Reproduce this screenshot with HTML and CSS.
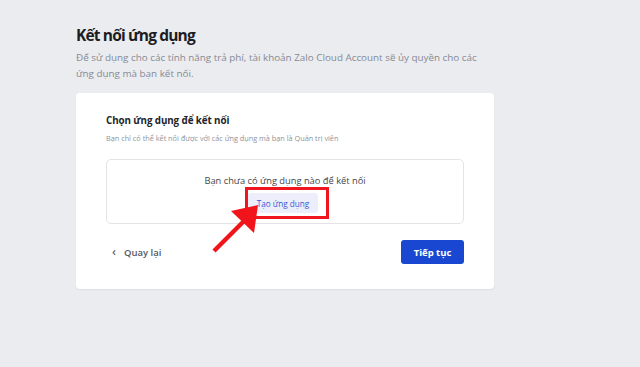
FILE: index.html
```html
<!DOCTYPE html>
<html lang="vi">
<head>
<meta charset="utf-8">
<link rel="stylesheet" href="styles.css">
</head>
<body>
<main class="page">
  <h1 class="title">Kết nối ứng dụng</h1>
  <p class="lead">Để sử dụng cho các tính năng trả phí, tài khoản Zalo Cloud Account sẽ ủy quyền cho các ứng dụng mà bạn kết nối.</p>
  <section class="card">
    <h2 class="card-title">Chọn ứng dụng để kết nối</h2>
    <p class="card-sub">Bạn chỉ có thể kết nối được với các ứng dụng mà bạn là Quản trị viên</p>
    <div class="empty">
      <p class="empty-text">Bạn chưa có ứng dụng nào để kết nối</p>
      <div class="highlight">
        <button class="create-btn">Tạo ứng dụng</button>
      </div>
    </div>
    <div class="actions">
      <a class="back"><span class="chev">‹</span>Quay lại</a>
      <button class="next-btn">Tiếp tục</button>
    </div>
  </section>
</main>
<svg class="arrow" width="640" height="367" viewBox="0 0 640 367">
  <line x1="214" y1="251" x2="244" y2="221" stroke="#f2141b" stroke-width="4.5" stroke-linecap="butt"/>
  <polygon points="231,211 258,205 254,233" fill="#f2141b"/>
</svg>
</body>
</html>
```
FILE: styles.css
```css
html, body {
  margin: 0;
  padding: 0;
}
body {
  background: #ebecf0;
  width: 640px;
  height: 367px;
  overflow: hidden;
  font-family: "Open Sans", "Noto Sans", sans-serif;
  position: relative;
}
.page {
  padding: 23px 0 0 76px;
  width: 420px;
}
.title {
  margin: 0;
  font-size: 15.5px;
  line-height: 24px;
  font-weight: 700;
  color: #1b1d22;
  letter-spacing: -0.85px;
}
.lead {
  margin: 2px 0 0 0;
  font-size: 9.85px;
  line-height: 16px;
  color: #868a92;
  width: 420px;
}
.card {
  margin-top: 12px;
  width: 418px;
  box-sizing: border-box;
  background: #fff;
  border-radius: 4px;
  box-shadow: 0 1px 2px rgba(0,0,0,0.06);
  padding: 21px 30px 25px 30px;
}
.card-title {
  margin: 0;
  font-size: 9.8px;
  line-height: 14px;
  font-weight: 700;
  color: #222429;
  letter-spacing: -0.1px;
}
.card-sub {
  margin: 4px 0 0 0;
  font-size: 7.3px;
  line-height: 12px;
  color: #90939a;
}
.empty {
  margin-top: 15px;
  border: 1px solid #e3e4e8;
  border-radius: 5px;
  height: 65px;
  display: flex;
  flex-direction: column;
  align-items: center;
  padding-top: 15px;
  box-sizing: border-box;
}
.empty-text {
  margin: 0;
  font-size: 9.3px;
  line-height: 12px;
  color: #43464d;
}
.highlight {
  margin-top: 0;
  margin-left: 4px;
  border: 3px solid #f01620;
  padding: 3px 8px 3px 0;
}
.create-btn {
  display: block;
  border: none;
  background: #eceffb;
  color: #3a57d4;
  font-family: inherit;
  font-size: 8.2px;
  width: 70px;
  height: 20px;
  border-radius: 3px;
  padding: 0;
}
.actions {
  margin-top: 16px;
  display: flex;
  justify-content: space-between;
  align-items: center;
}
.back {
  display: flex;
  align-items: center;
  font-size: 9.5px;
  font-weight: 600;
  color: #55585f;
  padding-left: 6px;
}
.chev {
  font-size: 12px;
  margin-right: 8px;
  line-height: 12px;
  color: #6a6d74;
}
.next-btn {
  display: block;
  border: none;
  background: #1a47d2;
  color: #fff;
  font-family: inherit;
  font-size: 9.5px;
  font-weight: 700;
  width: 63px;
  height: 24px;
  border-radius: 3px;
}
.arrow {
  position: absolute;
  left: 0;
  top: 0;
  pointer-events: none;
}
```
